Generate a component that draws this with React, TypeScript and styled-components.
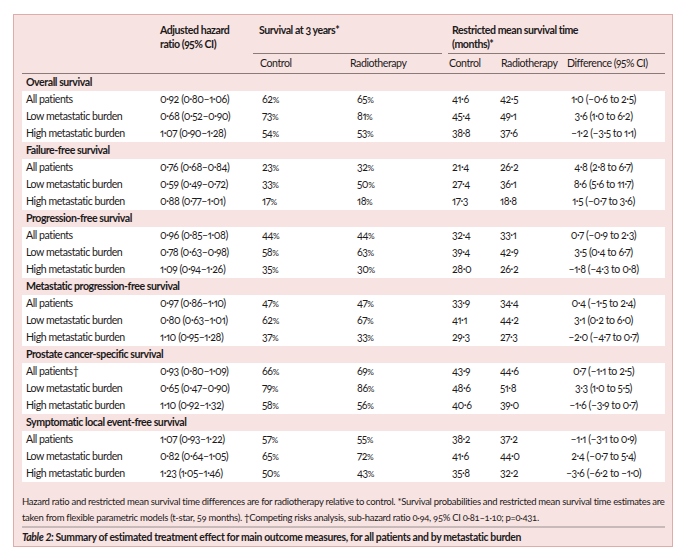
import React from "react";
import styled, { createGlobalStyle } from "styled-components";

const GlobalStyle = createGlobalStyle`
  body {
    margin: 0;
    background: #ffffff;
    font-family: "Lato", "Open Sans", sans-serif;
    color: #1d1a1b;
  }
`;

const Page = styled.div`
  width: 687px;
  height: 558px;
  padding: 14px 0 0 13px;
  box-sizing: border-box;
`;

const Box = styled.div`
  width: 660px;
  height: 533px;
  box-sizing: border-box;
  background: #f7e3e1;
  border: 1px solid #dcadab;
  padding: 0 7px 0 8px;
`;

const Table = styled.table`
  width: 643px;
  border-collapse: collapse;
  table-layout: fixed;
  font-size: 10.6px;
  letter-spacing: -0.45px;
  font-feature-settings: "onum" 1, "pnum" 1;
`;

const Col = styled.col<{ $w: number }>`
  width: ${(p) => p.$w}px;
`;

const HeadCell = styled.th<{ $pl?: number; $line?: boolean; $gap?: boolean }>`
  text-align: left;
  vertical-align: top;
  font-weight: 700;
  line-height: 14px;
  padding: 8px 0 2px ${(p) => p.$pl ?? 0}px;
  border-bottom: ${(p) => (p.$line ? "1px solid #8a7b79" : "none")};
  border-left: ${(p) => (p.$gap ? "6px solid #f7e3e1" : "none")};
`;

const SubHeadRow = styled.tr`
  border-bottom: 1px solid #8a7b79;
`;

const SubHead = styled.th<{ $pl?: number }>`
  text-align: left;
  font-weight: 400;
  height: 19px;
  padding: 0 0 0 ${(p) => p.$pl ?? 0}px;
  line-height: 19px;
`;

const SectionCell = styled.td`
  font-weight: 700;
  height: 17px;
  padding: 0 0 0 4px;
  line-height: 17px;
`;

const DataRow = styled.tr`
  background: #ffffff;
`;

const Cell = styled.td<{ $pl?: number; $center?: boolean }>`
  height: 17px;
  line-height: 17px;
  padding: 0 ${(p) => (p.$center ? 20 : 0)}px 0 ${(p) => p.$pl ?? 0}px;
  text-align: ${(p) => (p.$center ? "center" : "left")};
  white-space: nowrap;
`;

const Pct = styled.span`
  font-size: 8.3px;
  line-height: 1;
`;

const Footnote = styled.p`
  margin: 0;
  padding: 12px 0 0 0;
  font-size: 9.5px;
  letter-spacing: -0.3px;
  line-height: 16px;
  height: 32px;
  border-bottom: 2px solid #c8bab8;
  white-space: nowrap;
  font-feature-settings: "onum" 1;
`;

const Caption = styled.div`
  font-size: 10.4px;
  font-weight: 700;
  line-height: 19px;
  letter-spacing: -0.35px;
`;

type Row = [string, string, string, string, string, string, string];

const sections: { title: string; rows: Row[] }[] = [
  {
    title: "Overall survival",
    rows: [
      ["All patients", "0·92 (0·80–1·06)", "62", "65", "41·6", "42·5", "1·0 (–0·6 to 2·5)"],
      ["Low metastatic burden", "0·68 (0·52–0·90)", "73", "81", "45·4", "49·1", "3·6 (1·0 to 6·2)"],
      ["High metastatic burden", "1·07 (0·90–1·28)", "54", "53", "38·8", "37·6", "–1·2 (–3·5 to 1·1)"],
    ],
  },
  {
    title: "Failure-free survival",
    rows: [
      ["All patients", "0·76 (0·68–0·84)", "23", "32", "21·4", "26·2", "4·8 (2·8 to 6·7)"],
      ["Low metastatic burden", "0·59 (0·49–0·72)", "33", "50", "27·4", "36·1", "8·6 (5·6 to 11·7)"],
      ["High metastatic burden", "0·88 (0·77–1·01)", "17", "18", "17·3", "18·8", "1·5 (–0·7 to 3·6)"],
    ],
  },
  {
    title: "Progression-free survival",
    rows: [
      ["All patients", "0·96 (0·85–1·08)", "44", "44", "32·4", "33·1", "0·7 (–0·9 to 2·3)"],
      ["Low metastatic burden", "0·78 (0·63–0·98)", "58", "63", "39·4", "42·9", "3·5 (0·4 to 6·7)"],
      ["High metastatic burden", "1·09 (0·94–1·26)", "35", "30", "28·0", "26·2", "–1·8 (–4·3 to 0·8)"],
    ],
  },
  {
    title: "Metastatic progression-free survival",
    rows: [
      ["All patients", "0·97 (0·86–1·10)", "47", "47", "33·9", "34·4", "0·4 (–1·5 to 2·4)"],
      ["Low metastatic burden", "0·80 (0·63–1·01)", "62", "67", "41·1", "44·2", "3·1 (0·2 to 6·0)"],
      ["High metastatic burden", "1·10 (0·95–1·28)", "37", "33", "29·3", "27·3", "–2·0 (–4·7 to 0·7)"],
    ],
  },
  {
    title: "Prostate cancer-specific survival",
    rows: [
      ["All patients†", "0·93 (0·80–1·09)", "66", "69", "43·9", "44·6", "0·7 (–1·1 to 2·5)"],
      ["Low metastatic burden", "0·65 (0·47–0·90)", "79", "86", "48·6", "51·8", "3·3 (1·0 to 5·5)"],
      ["High metastatic burden", "1·10 (0·92–1·32)", "58", "56", "40·6", "39·0", "–1·6 (–3·9 to 0·7)"],
    ],
  },
  {
    title: "Symptomatic local event-free survival",
    rows: [
      ["All patients", "1·07 (0·93–1·22)", "57", "55", "38·2", "37·2", "–1·1 (–3·1 to 0·9)"],
      ["Low metastatic burden", "0·82 (0·64–1·05)", "65", "72", "41·6", "44·0", "2·4 (–0·7 to 5·4)"],
      ["High metastatic burden", "1·23 (1·05–1·46)", "50", "43", "35·8", "32·2", "–3·6 (–6·2 to –1·0)"],
    ],
  },
];

export default function App() {
  return (
    <>
      <GlobalStyle />
      <Page>
        <Box>
          <Table>
            <colgroup>
              <Col $w={133} />
              <Col $w={98} />
              <Col $w={92} />
              <Col $w={100} />
              <Col $w={52} />
              <Col $w={65} />
              <Col $w={103} />
            </colgroup>
            <thead>
              <tr>
                <HeadCell />
                <HeadCell $pl={5}>
                  Adjusted hazard
                  <br />
                  ratio (95% CI)
                </HeadCell>
                <HeadCell $pl={6} colSpan={2} $line>
                  Survival at 3 years*
                </HeadCell>
                <HeadCell colSpan={3} $pl={4} $line $gap>
                  Restricted mean survival time
                  <br />
                  (months)*
                </HeadCell>
              </tr>
              <SubHeadRow>
                <SubHead />
                <SubHead />
                <SubHead $pl={7}>Control</SubHead>
                <SubHead $pl={5}>Radiotherapy</SubHead>
                <SubHead $pl={4}>Control</SubHead>
                <SubHead $pl={4}>Radiotherapy</SubHead>
                <SubHead $pl={5}>Difference (95% CI)</SubHead>
              </SubHeadRow>
            </thead>
            {sections.map((s) => (
              <tbody key={s.title}>
                <tr>
                  <SectionCell colSpan={7}>{s.title}</SectionCell>
                </tr>
                {s.rows.map((r) => (
                  <DataRow key={r[0]}>
                    <Cell $pl={4}>{r[0]}</Cell>
                    <Cell $pl={5}>{r[1]}</Cell>
                    <Cell $pl={9}>
                      {r[2]}
                      <Pct>%</Pct>
                    </Cell>
                    <Cell $pl={12}>
                      {r[3]}
                      <Pct>%</Pct>
                    </Cell>
                    <Cell $pl={7}>{r[4]}</Cell>
                    <Cell $pl={3}>{r[5]}</Cell>
                    <Cell $center>{r[6]}</Cell>
                  </DataRow>
                ))}
              </tbody>
            ))}
          </Table>
          <Footnote>
            Hazard ratio and restricted mean survival time differences are for radiotherapy relative to control. *Survival
            probabilities and restricted mean survival time estimates are
            <br />
            taken from flexible parametric models (t-star, 59 months). †Competing risks analysis, sub-hazard ratio 0·94, 95%
            CI 0·81–1·10; p=0·431.
          </Footnote>
          <Caption>
            <i>Table 2:</i> Summary of estimated treatment effect for main outcome measures, for all patients and by
            metastatic burden
          </Caption>
        </Box>
      </Page>
    </>
  );
}
